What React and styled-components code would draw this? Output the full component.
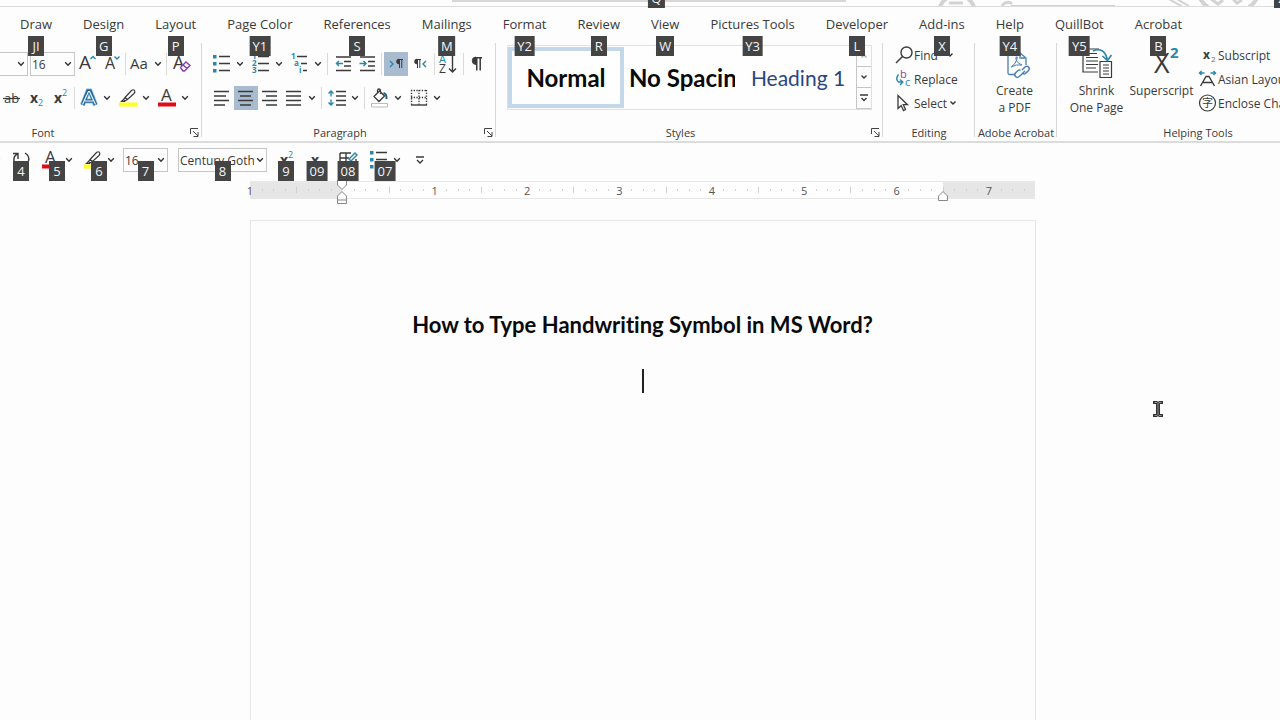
import React from 'react'
import styled, { createGlobalStyle } from 'styled-components'

const BLUE = '#2a86ad'
const INK = '#3a3a3a'

const tabs = [
  ['Draw', 'JI'],
  ['Design', 'G'],
  ['Layout', 'P'],
  ['Page Color', 'Y1'],
  ['References', 'S'],
  ['Mailings', 'M'],
  ['Format', 'Y2'],
  ['Review', 'R'],
  ['View', 'W'],
  ['Pictures Tools', 'Y3'],
  ['Developer', 'L'],
  ['Add-ins', 'X'],
  ['Help', 'Y4'],
  ['QuillBot', 'Y5'],
  ['Acrobat', 'B'],
]

export default function App() {
  return (
    <Window>
      <GlobalStyle />
      <TitleBar />
      <Tabs>
        {tabs.map(([name, tip]) => (
          <Tab key={name} href={'#' + name.replace(' ', '')}>
            {name}
            <TabTip>{tip}</TabTip>
          </Tab>
        ))}
      </Tabs>
      <Ribbon>
        <FontGroup />
        <ParagraphGroup />
        <StylesGroup />
        <EditingGroup />
        <AdobeGroup />
        <HelpingGroup />
      </Ribbon>
      <QuickAccess />
      <Workspace>
        <Ruler />
        <Page>
          <Heading>How to Type Handwriting Symbol in MS Word?</Heading>
          <EmptyLine><Caret /></EmptyLine>
        </Page>
        <Pointer width="12" height="18" viewBox="0 0 12 18" aria-hidden="true">
          <path d="M1 1h4l1 1 1-1h4v3H8v10h3v3H7l-1-1-1 1H1v-3h3V4H1z" fill="#333" />
          <path d="M2.5 2.5h2.5l1 1 1-1h2.5M6 3.5v11M2.5 15.5H5l1-1 1 1h2.5" fill="none" stroke="#aaa" strokeWidth=".8" />
        </Pointer>
      </Workspace>
    </Window>
  )
}

function TitleBar() {
  return (
    <Title>
      <SearchBox><TitleTip>Q</TitleTip></SearchBox>
      <Doodle width="345" height="6" viewBox="0 0 345 6" fill="none" stroke="#d3d3d3" aria-hidden="true">
        <path d="M5 7a18 18 0 0 1 34 0" strokeWidth="4" />
        <path d="M14 3h14" strokeWidth="3" />
        <path d="M67 7a6 6 0 0 1 10-3" strokeWidth="3" />
        <path d="M76 6h104" strokeWidth="2" />
        <path d="M232-2l16 9M240-2l14 8" strokeWidth="2" />
        <path d="M265-2a24 20 0 0 0 8 9M322-2a24 20 0 0 1-8 9" strokeWidth="4" />
        <path d="M276-1l7 5 5-4M298-1l4 4 5-3" strokeWidth="3" />
      </Doodle>
      <EdgeTip>Z</EdgeTip>
    </Title>
  )
}

function Icon({ size = 24, h, children, ...rest }) {
  return (
    <svg width={size} height={h || size} viewBox={`0 0 ${size} ${h || size}`} fill="none" stroke={INK} strokeWidth="1.4" aria-hidden="true" {...rest}>
      {children}
    </svg>
  )
}

// lettering inside icons
function T({ x, y, s, c = INK, b, children, ...rest }) {
  return (
    <text x={x} y={y} fontSize={s} fill={c} stroke="none" fontWeight={b ? 700 : 400} {...rest}>{children}</text>
  )
}

function Chevron() {
  return (
    <Arrow type="button" aria-label="More options">
      <svg width="8" height="6" viewBox="0 0 8 6" fill="none" stroke="#333" strokeWidth="1.4"><path d="M1.2 1.3 4 4.2l2.8-2.9" /></svg>
    </Arrow>
  )
}

function Combo({ label, value, size, open }) {
  return (
    <ComboBox $size={size} $open={open}>
      <ComboInput aria-label={label} defaultValue={value} />
      <Chevron />
    </ComboBox>
  )
}

function GroupFooter({ label, launcher, shift }) {
  return (
    <Footer $shift={shift}>
      {label}
      {launcher && (
        <Launcher type="button" aria-label={label + ' settings'}>
          <svg width="9" height="9" viewBox="0 0 9 9" fill="none" stroke="#444"><path d="M.5 6V.5H8M3 3l5 5M8 4v4.5H3.5" /></svg>
        </Launcher>
      )}
    </Footer>
  )
}

function HighlightIcon() {
  return (
    <Icon>
      <path d="M3 16.5h18v4H3z" fill="#ffff1a" stroke="none" />
      <path d="M9 11.5 15.5 4.5q2-1.5 3 0t-.5 3L11.5 13.5zM9 11.5l-1.5 2 1.5 1.5 2.5-1.5M7.5 13.5 5.5 15.5H9" strokeWidth="1.2" />
    </Icon>
  )
}

function FontColorIcon() {
  return (
    <Icon>
      <T x="6" y="15" s="17">A</T>
      <path d="M3 16.5h18v4H3z" fill="#e00b17" stroke="none" />
    </Icon>
  )
}

function BulletsIcon() {
  return (
    <Icon>
      <path d="M3 3h3.5v3.5H3zM3 10h3.5v3.5H3zM3 17h3.5v3.5H3z" fill={BLUE} stroke="none" />
      <path d="M9 4.5h11M9 11.5h11M9 18.5h11" />
    </Icon>
  )
}

function SuperIcon() {
  return <Icon><T x="6" y="17" s="14" b>x</T><T x="14" y="10" s="9" c={BLUE}>2</T></Icon>
}

function SubIcon() {
  return <Icon><T x="6" y="17" s="14" b>x</T><T x="14" y="20" s="9" c={BLUE}>2</T></Icon>
}

function FontGroup() {
  return (
    <Group $width={202}>
      <Rows>
        <Row $end={9}>
          <Combo label="Font" value="" open />
          <Combo label="Font size" value="16" size={45} />
          <Tool aria-label="Grow font"><Icon><T x="4" y="17" s="19">A</T><path d="M15.5 7 18 4.5 20.5 7" stroke={BLUE} /></Icon></Tool>
          <Tool aria-label="Shrink font"><Icon><T x="6" y="17" s="16">A</T><path d="M15.5 4.5 18 7l2.5-2.5" stroke={BLUE} /></Icon></Tool>
          <Sep $gap={2} />
          <Tool aria-label="Change case"><Icon><T x="2" y="17" s="15">Aa</T></Icon></Tool>
          <Chevron />
          <Sep $gap={2} />
          <Tool aria-label="Clear formatting">
            <Icon>
              <T x="4" y="17" s="18">A</T>
              <path d="M11.5 15.5 17 10l4 3.5-5.5 5.5h-1.5zM14 13l4 3.5" stroke="#8b3fa0" fill="#fdfdfd" />
            </Icon>
          </Tool>
        </Row>
        <Row $end={11}>
          <Tool aria-label="Strikethrough"><Icon><T x="4" y="17" s="13">ab</T><path d="M3 12.5h17" strokeWidth="1.2" /></Icon></Tool>
          <Tool aria-label="Subscript"><SubIcon /></Tool>
          <Tool aria-label="Superscript"><SuperIcon /></Tool>
          <Sep $gap={2} />
          <Tool aria-label="Text effects">
            <Icon>
              <path d="M5.5 19 11 5h2l5.5 14M8 15h8" stroke="#8cc3e4" strokeWidth="5" />
              <path d="M5.5 19 11 5h2l5.5 14M8 15h8" stroke="#2468a0" strokeWidth="3.6" />
              <path d="M5.5 18.5 11.5 5.5h1l6 13M8 15h8" stroke="#fff" strokeWidth="1.1" />
            </Icon>
          </Tool>
          <Chevron />
          <Gap />
          <Tool aria-label="Highlight"><HighlightIcon /></Tool>
          <Chevron />
          <Gap />
          <Tool aria-label="Font color"><FontColorIcon /></Tool>
          <Chevron />
        </Row>
      </Rows>
      <GroupFooter label="Font" launcher shift={116} />
    </Group>
  )
}

function ParagraphGroup() {
  return (
    <Group $width={294}>
      <Rows>
        <Row $start={8}>
          <Tool aria-label="Bullets"><BulletsIcon /></Tool>
          <Chevron />
          <Gap />
          <Tool aria-label="Numbering">
            <Icon>
              <T x="3" y="7" s="8" c={BLUE} b>1</T><T x="3" y="14" s="8" c={BLUE} b>2</T><T x="3" y="21" s="8" c={BLUE} b>3</T>
              <path d="M9 4.5h11M9 11.5h11M9 18.5h11" />
            </Icon>
          </Tool>
          <Chevron />
          <Gap />
          <Tool aria-label="Multilevel list">
            <Icon>
              <T x="3" y="7" s="8" c={BLUE} b>1</T><T x="6" y="14" s="8" c={BLUE} b>a</T><T x="11" y="21" s="8" c={BLUE} b>i</T>
              <path d="M9 4.5h10M13 11.5h6M15 18.5h4" />
            </Icon>
          </Tool>
          <Chevron />
          <Sep $gap={3} />
          <Tool aria-label="Decrease indent">
            <Icon><path d="M5 5h15M13 9.5h7M13 14h7M5 18.5h15" /><path d="M12 11.5H5.5M8 9l-2.5 2.5L8 14" stroke={BLUE} /></Icon>
          </Tool>
          <Tool aria-label="Increase indent">
            <Icon><path d="M5 5h15M13 9.5h7M13 14h7M5 18.5h15" /><path d="M4.5 11.5H11M8.5 9l2.5 2.5L8.5 14" stroke={BLUE} /></Icon>
          </Tool>
          <Sep $gap={2} />
          <Tool aria-label="Left to right" $on><Icon><path d="M6 9l3 3-3 3" stroke={BLUE} /><Pilcrow x={11} y={7} s={1} /></Icon></Tool>
          <Tool aria-label="Right to left"><Icon><Pilcrow x={5} y={7} s={1} /><path d="M18 9l-3 3 3 3" stroke={BLUE} /></Icon></Tool>
          <Sep $gap={2} />
          <Tool aria-label="Sort">
            <Icon><T x="2" y="11" s="11" c={BLUE}>A</T><T x="2" y="21" s="12">Z</T><path d="M15.5 3v17M12 16.5l3.5 3.5 3.5-3.5" /></Icon>
          </Tool>
          <Sep $gap={2} />
          <Tool aria-label="Show marks"><Icon><Pilcrow x={4} y={5} s={1.5} /></Icon></Tool>
        </Row>
        <Row $start={8}>
          <Tool aria-label="Align left"><Icon><path d="M4 5.5h15M4 10h12M4 14.5h15M4 19h11" /></Icon></Tool>
          <Tool aria-label="Center" $on><Icon><path d="M4 5.5h15M6 10h11M4 14.5h15M6 19h11" /></Icon></Tool>
          <Tool aria-label="Align right"><Icon><path d="M4 5.5h15M8 10h11M4 14.5h15M8 19h11" /></Icon></Tool>
          <Tool aria-label="Justify"><Icon><path d="M4 5.5h15M4 10h15M4 14.5h15M4 19h15" /></Icon></Tool>
          <Chevron />
          <Sep $gap={3} />
          <Tool aria-label="Line spacing">
            <Icon>
              <path d="M11 5.5h10M11 10h10M11 14.5h10M11 19h10" />
              <path d="M6 10.5V5M3.5 7.5 6 5l2.5 2.5M6 13.5V19M3.5 16.5 6 19l2.5-2.5" stroke={BLUE} />
            </Icon>
          </Tool>
          <Chevron />
          <Sep $gap={3} />
          <Tool aria-label="Shading">
            <Icon>
              <path d="M6 10.5 11.5 5l5 5-5.5 5.5zM9.5 7V4.5a1.5 1.5 0 0 1 3 0V8" strokeWidth="1.3" />
              <path d="M15.5 7q3.5 1 3 6" stroke="#1f5f80" strokeWidth="2" />
              <path d="M3.5 17.5h16v3.5h-16z" stroke="#bbb" fill="#fff" strokeWidth="1" />
            </Icon>
          </Tool>
          <Chevron />
          <Gap />
          <Tool aria-label="Borders">
            <Icon><path d="M4.5 4v15M19.5 4v15M4 4.5h16M12 4v15M4 11.5h16" strokeDasharray="1.3 1.4" /><path d="M4 19h16" /></Icon>
          </Tool>
          <Chevron />
        </Row>
      </Rows>
      <GroupFooter label="Paragraph" launcher shift={18} />
    </Group>
  )
}

function Pilcrow({ x, y, s }) {
  return (
    <g transform={`translate(${x} ${y}) scale(${s})`}>
      <path d="M4 0a2.5 2.5 0 0 0 0 5z" fill={INK} stroke={INK} strokeWidth=".6" />
      <path d="M3.5.5H8M4.5.5V9M6.8.5V9" strokeWidth="1" />
    </g>
  )
}

function StylesGroup() {
  return (
    <Group $width={387}>
      <Gallery>
        <StyleCard $on><StyleName>Normal</StyleName></StyleCard>
        <StyleCard><StyleName>No Spacing</StyleName></StyleCard>
        <StyleCard $heading><StyleName>Heading 1</StyleName></StyleCard>
        <Scroller>
          <ScrollButton aria-label="Previous styles" disabled><Icon size={8} h={6} stroke="#aaa"><path d="M1.5 4.5 4 2l2.5 2.5" /></Icon></ScrollButton>
          <ScrollButton aria-label="Next styles"><Icon size={8} h={6}><path d="M1.5 1.5 4 4l2.5-2.5" /></Icon></ScrollButton>
          <ScrollButton aria-label="All styles"><Icon size={8} h={8}><path d="M0 1h8M1.5 4 4 6.5 6.5 4" /></Icon></ScrollButton>
        </Scroller>
      </Gallery>
      <GroupFooter label="Styles" launcher shift={18} />
    </Group>
  )
}

function EditingGroup() {
  return (
    <Group $width={92}>
      <Stack>
        <Line type="button">
          <Icon size={20}><circle cx="12.5" cy="7.5" r="5.5" /><path d="M8.5 11.5 2 18" /></Icon>
          Find
          <LineArrow $gap={8} />
        </Line>
        <Line type="button">
          <Icon size={20}>
            <T x="6" y="9" s="11" c="#8b3fa0">b</T><T x="11" y="17" s="11" c={BLUE}>c</T>
            <path d="M4.5 5.5q-3.5 5 0 7.5h4M6 10.5 8.8 13 6 16" stroke={BLUE} />
          </Icon>
          Replace
        </Line>
        <Line type="button">
          <Icon size={20}><path d="M4 2.5v13l3.2-3 2.3 5 2-1-2.2-4.8h4.2z" strokeWidth="1.3" /></Icon>
          Select
          <LineArrow $gap={2} />
        </Line>
      </Stack>
      <GroupFooter label="Editing" />
    </Group>
  )
}

function LineArrow({ $gap }) {
  return (
    <InlineArrow $gap={$gap} width="8" height="6" viewBox="0 0 8 6" fill="none" stroke="#333" strokeWidth="1.4" aria-hidden="true">
      <path d="M1.5 1.5 4 4l2.5-2.5" />
    </InlineArrow>
  )
}

function AdobeGroup() {
  return (
    <Group $width={82}>
      <BigRow>
        <BigTool type="button">
          <Icon size={34} stroke="#4a7fb5" strokeWidth="1.3">
            <path d="M17 26.5h-5.5q-1.5 0-1.5-1.5V7M19 5h3l6 5v7M22 5v5h5" />
            <path d="M13 19q5-3 6-8 1-3-1-2-1 5 6 8-6-1-11 2z" strokeWidth="1" />
            <path d="m24 22 3-3q2-1.5 3.5 0t0 3.5l-3 3q-1.5 1-2.5 0M27 23l-3 3q-2 2-3.5 3t-3-.5 0-3.5l2.5-2.5q1.5-1 2.5 0" strokeWidth="1.5" />
          </Icon>
          <span>Create<br />a PDF</span>
        </BigTool>
      </BigRow>
      <GroupFooter label="Adobe Acrobat" />
    </Group>
  )
}

function HelpingGroup() {
  return (
    <Group $width={282}>
      <BigRow>
        <BigTool type="button">
          <Icon size={34}>
            <path d="M18 24H3V1h16M7 5.5h10M6 9.5h12M6 13h12M6 16.5h12M6 20h10" strokeWidth="1.2" />
            <path d="M20 13.5h11.5v16H20zM23 17h6M23 20h6M23 23h6M23 26h6" strokeWidth="1.2" fill="#fdfdfd" />
            <path d="M13 3q11-5 14.5 9M22.5 8l5 4.5 4-5.5" stroke={BLUE} strokeWidth="1.6" />
          </Icon>
          <span>Shrink<br />One Page</span>
        </BigTool>
        <BigTool type="button">
          <Icon size={34}><T x="9" y="25" s="27">X</T><T x="25" y="10" s="15" c={BLUE} b>2</T></Icon>
          <span>Superscript</span>
        </BigTool>
        <Stack $flush>
          <Line type="button"><Icon size={20}><T x="5" y="14" s="12" b>x</T><T x="13" y="17" s="8" c={BLUE}>2</T></Icon>Subscript</Line>
          <Line type="button">
            <Icon size={20}>
              <path d="M2.5 17 8 7.5h3L16.5 17M5 13.5h9.5" />
              <path d="M1.5 4h5M3.5 2l-2 2 2 2M12.5 4h5M15.5 2l2 2-2 2" stroke={BLUE} />
            </Icon>
            Asian Layout
          </Line>
          <Line type="button">
            <Icon size={20}><circle cx="9.5" cy="10" r="8" strokeWidth="1.2" /><T x="4" y="14" s="11">字</T></Icon>
            Enclose Characters
          </Line>
        </Stack>
      </BigRow>
      <GroupFooter label="Helping Tools" />
    </Group>
  )
}

function QuickAccess() {
  return (
    <Quick>
      <QuickSet $gap={6}>
        <Clipped><Chevron /></Clipped>
        <Split>
          <Tool aria-label="Repeat"><Icon><path d="M4 5.5h5V11M8.5 6Q4 8 5 14M16 5q5 3 3.5 8-1 3-4 5" /></Icon></Tool>
          <Tip>4</Tip>
        </Split>
        <Split><Tool aria-label="Font color"><FontColorIcon /></Tool><Chevron /><Tip>5</Tip></Split>
        <Split><Tool aria-label="Highlight"><HighlightIcon /></Tool><Chevron /><Tip>6</Tip></Split>
        <Split><Combo label="Size" value="16" size={45} /><Tip>7</Tip></Split>
      </QuickSet>
      <QuickSet $gap={7}>
        <Split><Combo label="Font name" value="Century Gothic" size={89} /><Tip>8</Tip></Split>
        <Split><Tool aria-label="Superscript"><SuperIcon /></Tool><Tip>9</Tip></Split>
        <Split><Tool aria-label="Subscript"><SubIcon /></Tool><Tip>09</Tip></Split>
        <Split>
          <Tool aria-label="Draw table">
            <Icon><path d="M4 5h11M4 5v14h16V11M4 10h9M10 5v14" /><path d="m13 11 6-6 2 2-6 6z" stroke={BLUE} /></Icon>
          </Tool>
          <Tip>08</Tip>
        </Split>
        <Split><Tool aria-label="Bullets"><BulletsIcon /></Tool><Chevron /><Tip>07</Tip></Split>
        <Tool aria-label="Customize toolbar"><Icon><path d="M6 9h8M7 12l3 3 3-3" /></Icon></Tool>
      </QuickSet>
    </Quick>
  )
}

function Ruler() {
  // one mark for each eighth of an inch, the text starts one inch in
  const marks = Array.from({ length: 68 }, (_, i) => i)
  return (
    <RulerBar>
      {marks.map((i) => (
        <Mark key={i} $margin={i < 8 || i >= 60}>
          {i % 8 === 0 && i !== 8 ? <Num>{Math.abs(i / 8 - 1)}</Num> : i !== 8 && <Tick $half={i % 4 === 0} />}
        </Mark>
      ))}
      <Indent $inch={1} width="11" height="24" viewBox="0 0 11 24" fill="#fff" stroke="#888">
        <path d="M1 .5h9v4.5L5.5 9.5 1 5zM1 20v-4l4.5-4.5L10 16v7.5H1zM1 20h9" />
      </Indent>
      <Indent $inch={7.5} width="11" height="24" viewBox="0 0 11 24" fill="#fff" stroke="#888">
        <path d="M1 20.5v-4.5l4.5-4.5L10 16v4.5z" />
      </Indent>
    </RulerBar>
  )
}

const GlobalStyle = createGlobalStyle`
    * { box-sizing: border-box; }
    body {
        margin: 0;
        background: #fdfdfd;
        overflow: hidden;
    }
    button, input {
        font: inherit;
        color: inherit;
    }
    svg { flex-shrink: 0; overflow: visible; }
`;

const Window = styled.div`
    display: flex;
    flex-direction: column;
    min-height: 100vh;
    overflow: hidden;
    background: #fdfdfd;
    color: #3a3a3a;
    font-family: "Open Sans", "Noto Sans", "Noto Sans CJK SC", sans-serif;
    font-size: 12px;
`;

const Title = styled.header`
    position: relative;
    display: flex;
    justify-content: center;
    height: 7px;
    padding-left: 17px;
    border-bottom: 1px solid #dcdcdc;
`;

const SearchBox = styled.div`
    position: relative;
    width: 394px;
    height: 2px;
    background: #d6d6d6;
`;

const Doodle = styled.svg`
    position: absolute;
    right: 0;
    top: 0;
    && { overflow: hidden; }
`;

const Badge = styled.span`
    position: absolute;
    z-index: 2;
    min-width: 16px;
    height: 20px;
    padding: 0 3px;
    background: #444;
    color: #f4f4f4;
    font-size: 13px;
    line-height: 20px;
    text-align: center;
`;

const TitleTip = styled(Badge)`
    left: 52%;
    bottom: -6px;
    transform: translateX(-50%);
`;

const EdgeTip = styled(Badge)`
    right: -10px;
    bottom: -2px;
`;

const TabTip = styled(Badge)`
    left: 50%;
    top: 29px;
    transform: translateX(-50%);
`;

const Tip = styled(Badge)`
    left: 50%;
    top: 13px;
    transform: translateX(-50%);
`;

const Tabs = styled.nav`
    display: flex;
    gap: 31px;
    height: 34px;
    padding-left: 20px;
`;

const Tab = styled.a`
    position: relative;
    color: #3a3a3a;
    font-size: 13px;
    line-height: 34px;
    text-decoration: none;
    white-space: nowrap;
`;

const Ribbon = styled.section`
    display: flex;
    height: 102px;
    border-bottom: 2px solid #dcdcdc;
`;

const Group = styled.div`
    position: relative;
    display: flex;
    flex-direction: column;
    justify-content: space-between;
    flex: 0 0 ${(p) => p.$width}px;
    min-width: 0;

    &::after {
        content: "";
        position: absolute;
        right: 0;
        top: 2px;
        bottom: 4px;
        border-right: 1px solid #d8d8d8;
    }
`;

const Footer = styled.div`
    position: relative;
    height: 18px;
    padding-right: ${(p) => p.$shift || 0}px;
    font-size: 11px;
    line-height: 20px;
    text-align: center;
    white-space: nowrap;
`;

const Launcher = styled.button`
    position: absolute;
    right: 3px;
    top: 5px;
    display: flex;
    padding: 0;
    border: 0;
    background: none;
`;

const Rows = styled.div`
    display: flex;
    flex-direction: column;
    gap: 10px;
    padding-top: 11px;
`;

const Row = styled.div`
    display: flex;
    align-items: center;
    justify-content: ${(p) => (p.$end ? 'flex-end' : 'flex-start')};
    padding-left: ${(p) => p.$start || 0}px;
    padding-right: ${(p) => p.$end || 0}px;
    height: 24px;
`;

const Tool = styled.button.attrs({ type: 'button' })`
    display: flex;
    flex: 0 0 24px;
    height: 24px;
    padding: 0;
    border: 0;
    background: ${(p) => (p.$on ? '#a9bccf' : 'none')};
`;

const Arrow = styled.button`
    display: flex;
    align-items: center;
    justify-content: center;
    flex: 0 0 12px;
    height: 24px;
    padding: 0;
    border: 0;
    background: none;
`;

const Sep = styled.span`
    flex: 0 0 1px;
    height: 22px;
    margin: 0 ${(p) => p.$gap}px;
    background: #dadada;
`;

const Gap = styled.span`
    flex: 0 0 3px;
`;

const ComboBox = styled.div`
    display: flex;
    align-items: center;
    flex: ${(p) => (p.$open ? '1' : '0 0 ' + p.$size + 'px')};
    height: 24px;
    margin-right: ${(p) => (p.$open ? 2 : 0)}px;
    border: 1px solid #c6c6c6;
    border-left-width: ${(p) => (p.$open ? 0 : 1)}px;
    background: #fdfdfd;
`;

const ComboInput = styled.input`
    flex: 1;
    width: 0;
    min-width: 0;
    padding: 0 0 0 1px;
    border: 0;
    outline: 0;
    background: none;
    font-size: 12px;
`;

const Gallery = styled.div`
    display: flex;
    height: 65px;
    margin: 4px 11px 0;
    border: 1px solid #e0e0e0;
`;

const StyleCard = styled.button`
    flex: 0 0 116px;
    min-width: 0;
    margin: 1px 0;
    padding: 0 ${(p) => (p.$on ? 0 : 5)}px;
    border: 0 solid #c5d8e9;
    border-width: ${(p) => (p.$on ? 4 : 0)}px;
    background: #fefefe;
    color: ${(p) => (p.$heading ? '#2a4680' : '#0a0a0a')};
    font-family: Lato, sans-serif;
    font-size: ${(p) => (p.$heading ? 21 : 24)}px;
    font-weight: ${(p) => (p.$heading ? 400 : 700)};
    white-space: nowrap;
`;

const StyleName = styled.span`
    display: block;
    overflow: hidden;
`;

const Scroller = styled.div`
    display: flex;
    flex: 1;
    flex-direction: column;
    border-left: 1px solid #c6c6c6;
`;

const ScrollButton = styled.button`
    display: flex;
    flex: 1;
    align-items: center;
    justify-content: center;
    padding: 0;
    border: 0;
    border-bottom: 1px solid #c6c6c6;
    background: none;
`;

const Stack = styled.div`
    display: flex;
    flex-direction: column;
    padding: 2px 0 0 ${(p) => (p.$flush ? 4 : 11)}px;
`;

const Line = styled.button`
    display: flex;
    align-items: center;
    height: 24px;
    padding: 0;
    border: 0;
    background: none;
    white-space: nowrap;
`;

const InlineArrow = styled.svg`
    margin-left: ${(p) => p.$gap}px;
`;

const BigRow = styled.div`
    display: flex;
    justify-content: flex-start;
    padding-left: 7px;
`;

const BigTool = styled.button`
    display: flex;
    flex-direction: column;
    align-items: center;
    flex: 0 0 65px;
    padding: 7px 0 0;
    border: 0;
    background: none;
    line-height: 17px;
    white-space: nowrap;
`;

const Quick = styled.section`
    display: flex;
    gap: 10px;
    height: 38px;
    padding-top: 5px;
`;

const QuickSet = styled.div`
    display: flex;
    gap: ${(p) => p.$gap}px;
`;

const Split = styled.div`
    position: relative;
    display: flex;
    height: 24px;
`;

const Clipped = styled.div`
    display: flex;
    justify-content: flex-end;
    width: 3px;
`;

const Workspace = styled.main`
    position: relative;
    display: flex;
    flex: 1;
    flex-direction: column;
    align-items: center;
    padding-left: 5px;
`;

const RulerBar = styled.div`
    position: relative;
    display: flex;
    width: 785px;
    max-width: 100%;
    height: 18px;
    color: #555;
    font-size: 11px;
`;

const Mark = styled.span`
    position: relative;
    flex: 1;
    border: solid #e8e8e8;
    border-width: 1px 0;
    background: ${(p) => (p.$margin ? '#e6e6e6' : '#fefefe')};
`;

const Num = styled.span`
    position: absolute;
    left: 0;
    top: 0;
    line-height: 17px;
    transform: translateX(-50%);
`;

const Tick = styled.span`
    position: absolute;
    left: 0;
    top: ${(p) => (p.$half ? 5 : 7)}px;
    height: ${(p) => (p.$half ? 6 : 2)}px;
    border-left: 1px solid #cfcfcf;
`;

const Indent = styled.svg`
    position: absolute;
    left: ${(p) => (p.$inch / 8.5) * 100}%;
    top: -1px;
    transform: translateX(-50%);
`;

const Page = styled.article`
    display: flex;
    flex: 1;
    flex-direction: column;
    align-items: center;
    width: 786px;
    max-width: 100%;
    margin-top: 21px;
    padding-top: 90px;
    border: 1px solid #e6e6e6;
    border-bottom: 0;
`;

const Heading = styled.h1`
    margin: 0;
    color: #0a0a0a;
    font-family: Lato, sans-serif;
    font-size: 22px;
    font-weight: 700;
    font-variant-ligatures: none;
    line-height: 28px;
    white-space: nowrap;
`;

const EmptyLine = styled.p`
    display: flex;
    justify-content: center;
    margin: 30px 0 0;
`;

const Caret = styled.span`
    width: 2px;
    height: 24px;
    background: #222;
`;

const Pointer = styled.svg`
    position: absolute;
    left: calc(50% + 512px);
    top: 219px;
`;
